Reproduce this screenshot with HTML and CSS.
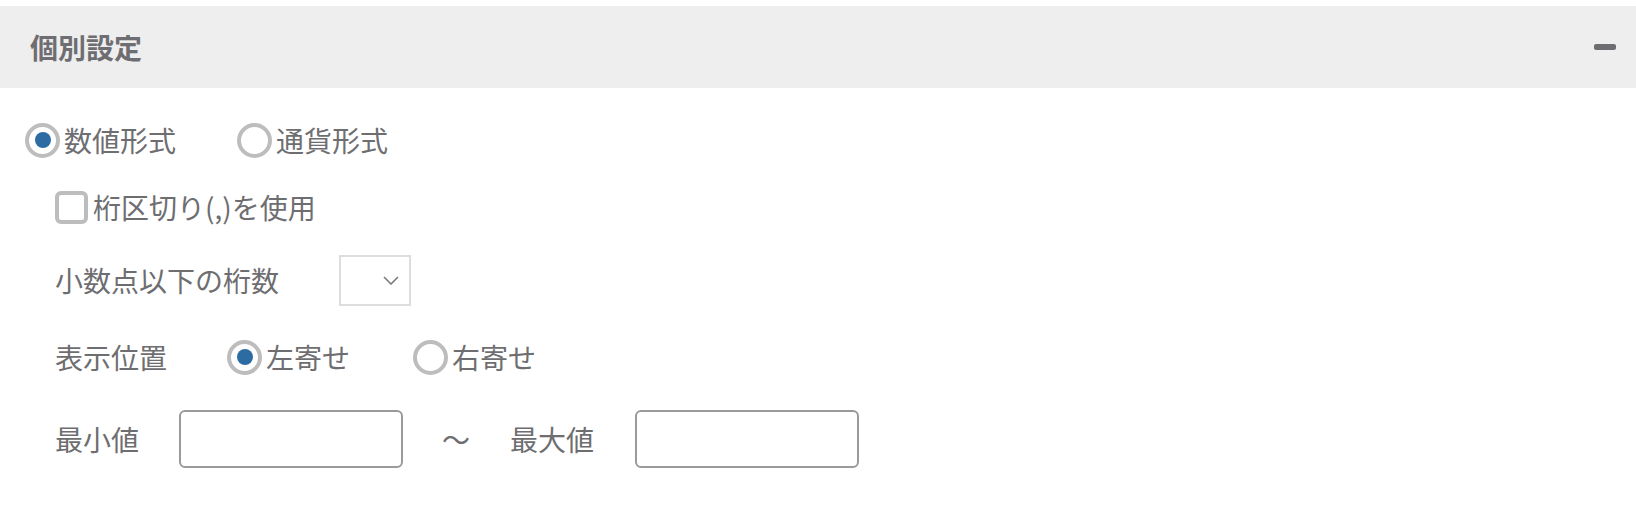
FILE: index.html
```html
<!DOCTYPE html>
<html lang="ja">
<head>
<meta charset="utf-8">
<title>個別設定</title>
<link rel="stylesheet" href="styles.css">
</head>
<body>
<section class="panel">
  <header class="panel-head">
    <h2 class="panel-title">個別設定</h2>
    <span class="collapse-btn" aria-label="折りたたむ"></span>
  </header>
  <div class="panel-body">
    <div class="row row-format">
      <label class="radio checked"><span class="radio-mark"></span><span class="opt-text">数値形式</span></label>
      <label class="radio radio-second"><span class="radio-mark"></span><span class="opt-text">通貨形式</span></label>
    </div>
    <div class="row row-sep indent">
      <label class="check"><span class="check-mark"></span><span class="check-text">桁区切り(,)を使用</span></label>
    </div>
    <div class="row row-decimal indent">
      <span class="field-label label-decimal">小数点以下の桁数</span>
      <div class="select">
        <svg class="chev" width="16" height="9" viewBox="0 0 16 9"><path d="M1 1 L8 8 L15 1" fill="none" stroke="#7a7a7a" stroke-width="1.6"/></svg>
      </div>
    </div>
    <div class="row row-align indent">
      <span class="field-label label-align">表示位置</span>
      <label class="radio checked"><span class="radio-mark"></span><span class="opt-text">左寄せ</span></label>
      <label class="radio radio-second2"><span class="radio-mark"></span><span class="opt-text">右寄せ</span></label>
    </div>
    <div class="row row-range indent">
      <span class="field-label label-min">最小値</span>
      <input class="num-input" type="text">
      <span class="tilde">～</span>
      <span class="field-label label-max">最大値</span>
      <input class="num-input" type="text">
    </div>
  </div>
</section>
</body>
</html>
```

FILE: styles.css
```css
* { box-sizing: border-box; }
body {
  margin: 0;
  background: #ffffff;
  font-family: "Noto Sans CJK JP", "Noto Sans", sans-serif;
  color: #6e6e71;
  font-size: 28px;
}
.panel { padding-top: 6px; }
.panel-head {
  height: 82px;
  background: #eeeeee;
  display: flex;
  align-items: center;
  justify-content: space-between;
  padding: 0 20px 0 30px;
}
.panel-title {
  margin: 0;
  font-size: 28px;
  font-weight: 700;
  color: #6e6e72;
  line-height: 1;
}
.collapse-btn {
  width: 22px;
  height: 6px;
  border-radius: 2px;
  background: #6d6d72;
}
.panel-body { padding: 28px 0 0 25px; }
.row {
  display: flex;
  align-items: center;
  height: 48px;
}
.indent { padding-left: 30px; }
.row-sep { margin-top: 19px; }
.row-decimal { margin-top: 23px; height: 52px; }
.row-align { margin-top: 27px; }
.row-range { margin-top: 29px; height: 58px; }

.radio { display: flex; align-items: center; line-height: 1; }
.radio-mark {
  width: 35px;
  height: 35px;
  border: 4px solid #bdbdbd;
  border-radius: 50%;
  display: flex;
  align-items: center;
  justify-content: center;
  background: #fff;
  flex: none;
}
.radio.checked .radio-mark::after {
  content: "";
  width: 16px;
  height: 16px;
  border-radius: 50%;
  background: #2d6ba3;
}
.opt-text { margin-left: 4px; }
.radio-second { margin-left: 61px; }
.radio-second2 { margin-left: 63px; }

.check { display: flex; align-items: center; line-height: 1; }
.check-mark {
  width: 33px;
  height: 33px;
  border: 4px solid #bdbdbd;
  border-radius: 6px;
  flex: none;
}
.check-text { margin-left: 5px; }

.field-label { line-height: 1; }
.label-decimal { margin-right: 60px; }
.label-align { margin-right: 60px; }
.label-min { margin-right: 40px; }
.label-max { margin-right: 41px; }

.select {
  width: 72px;
  height: 51px;
  border: 2px solid #dddddd;
  display: flex;
  align-items: center;
  justify-content: flex-end;
  padding-right: 10px;
}
.chev { display: block; }

.num-input {
  width: 224px;
  height: 58px;
  border: 2px solid #9a9a9a;
  border-radius: 6px;
  background: #fff;
  margin: 0;
  padding: 0 10px;
  font: inherit;
}
.tilde {
  margin: 0 40px 0 39px;
  line-height: 1;
}
```
